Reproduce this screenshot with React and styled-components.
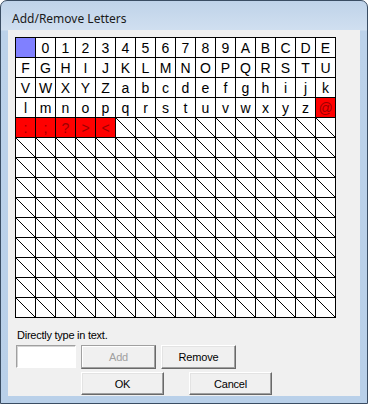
import React from 'react';
import styled, { createGlobalStyle } from 'styled-components';

const GlobalStyle = createGlobalStyle`
  html, body {
    margin: 0;
    padding: 0;
    background: #fff;
  }
  body {
    font-family: "Liberation Sans", Arial, sans-serif;
  }
`;

// Window chrome
const Window = styled.div`
  width: 368px;
  height: 404px;
  box-sizing: border-box;
  border: 1px solid #3a4d63;
  border-radius: 7px 7px 0 0;
  background: linear-gradient(to bottom, #bfd3e9 0, #d0dff0 29px, #bcd2ea 30px, #b9d0e9 100%);
  display: flex;
  flex-direction: column;
  padding: 0 7px 7px;
`;

const TitleBar = styled.div`
  height: 29px;
  box-sizing: border-box;
  padding: 6px 0 0 4px;
  display: flex;
  align-items: center;
  font-family: "Segoe UI", "Noto Sans", sans-serif;
  font-size: 12px;
  color: #1a1a1a;
`;

const Client = styled.div`
  flex: 1;
  background: #f0f0f0;
  padding: 7px 0 0 7px;
  display: flex;
  flex-direction: column;
`;

// Letter grid
const Grid = styled.div`
  display: grid;
  grid-template-columns: repeat(16, 19px);
  grid-auto-rows: 19px;
  gap: 1px;
  width: max-content;
  background: #000;
  border: 1px solid #000;
`;

const tones = {
  blue: { bg: '#8080ff', fg: '#000' },
  red: { bg: '#ff0000', fg: '#9c0000' },
  plain: { bg: '#fff', fg: '#000' },
};

const Cell = styled.div`
  background: ${p => tones[p.$tone].bg};
  color: ${p => tones[p.$tone].fg};
  display: flex;
  align-items: center;
  justify-content: center;
  font-size: 14px;
  line-height: 1;
  overflow: hidden;
`;

const Slash = () => (
  <svg width="19" height="19" viewBox="0 0 19 19" shapeRendering="crispEdges">
    <line x1="0" y1="0" x2="19" y2="19" stroke="#000" strokeWidth="1" />
  </svg>
);

// Bottom form
const Label = styled.div`
  margin: 11px 0 0 2px;
  font-size: 11px;
  line-height: 13px;
  letter-spacing: -0.25px;
  color: #000;
`;

const Row = styled.div`
  display: flex;
  gap: ${p => p.$gap}px;
  margin: ${p => p.$top}px 0 0 ${p => p.$left}px;
`;

const TextBox = styled.input`
  width: 60px;
  height: 23px;
  box-sizing: border-box;
  margin: 0;
  padding: 2px 3px;
  background: #fff;
  border: 1px solid;
  border-color: #a0a0a0 #fff #fff #a0a0a0;
  box-shadow: inset 1px 1px #d4d4d4;
  outline: none;
  font-family: inherit;
  font-size: 11px;
`;

const Button = styled.button`
  width: ${p => p.$w}px;
  height: ${p => p.$h}px;
  box-sizing: border-box;
  margin: 0;
  padding: 0;
  background: #f0f0f0;
  border: 1px solid;
  border-color: ${p => (p.$framed ? '#a0a0a0 #696969 #696969 #a0a0a0' : '#fff #696969 #696969 #fff')};
  box-shadow: inset -1px -1px #a0a0a0, inset 1px 1px ${p => (p.$framed ? '#fff' : '#e3e3e3')};
  font-family: "Liberation Sans", Arial, sans-serif;
  font-size: 11px;
  letter-spacing: -0.2px;
  color: #000;

  &:disabled {
    color: #a0a0a0;
  }
`;

const letters = [
  ['', '0', '1', '2', '3', '4', '5', '6', '7', '8', '9', 'A', 'B', 'C', 'D', 'E'],
  'FGHIJKLMNOPQRSTU'.split(''),
  'VWXYZabcdefghijk'.split(''),
  'lmnopqrstuvwxyz@'.split(''),
  [':', ';', '?', '>', '<'],
];

const cells = [];
for (let r = 0; r < 14; r++) {
  for (let c = 0; c < 16; c++) {
    const row = letters[r] || [];
    if (c < row.length) {
      let tone = 'plain';
      if (r === 0 && c === 0) tone = 'blue';
      if (r === 4 || row[c] === '@') tone = 'red';
      cells.push({ key: `${r}-${c}`, tone, ch: row[c] });
    } else {
      cells.push({ key: `${r}-${c}`, tone: 'plain', empty: true });
    }
  }
}

export default function App() {
  return (
    <>
      <GlobalStyle />
      <Window>
        <TitleBar>Add/Remove Letters</TitleBar>
        <Client>
          <Grid>
            {cells.map(cell => (
              <Cell key={cell.key} $tone={cell.tone}>
                {cell.empty ? <Slash /> : cell.ch}
              </Cell>
            ))}
          </Grid>
          <Label>Directly type in text.</Label>
          <Row $gap={5} $top={3} $left={1}>
            <TextBox type="text" />
            <Button $w={75} $h={24} $framed disabled>Add</Button>
            <Button $w={75} $h={24}>Remove</Button>
          </Row>
          <Row $gap={25} $top={3} $left={66}>
            <Button $w={83} $h={23}>OK</Button>
            <Button $w={83} $h={23}>Cancel</Button>
          </Row>
        </Client>
      </Window>
    </>
  );
}
